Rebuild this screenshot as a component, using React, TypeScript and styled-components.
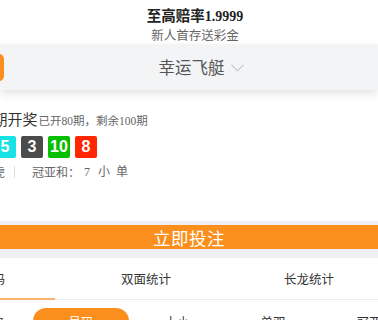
import React from 'react';
import styled, { createGlobalStyle } from 'styled-components';

const COLORS = {
  orange: '#fb8f1d',
  orangeLight: '#f9b36c',
  navBg: '#f3f4f6',
  band: '#efeff4',
  text: '#333333',
  textGray: '#666666',
  line: '#ececec',
};

const BALL_COLORS: Record<number, string> = {
  1: '#e6de00',
  2: '#0092dd',
  3: '#4b4b4b',
  4: '#ff7600',
  5: '#17e2e5',
  6: '#5234ff',
  7: '#bfbfbf',
  8: '#ff2600',
  9: '#780b00',
  10: '#07bf00',
};

const balls = [6, 1, 9, 4, 2, 7, 5, 3, 10, 8];
const dragonTiger = ['龙', '虎', '龙', '龙', '虎'];
const subTabs = ['冷热数', '号码', '大小', '单双', '冠亚'];

const GlobalStyle = createGlobalStyle`
  html, body {
    margin: 0;
    padding: 0;
    background: #fff;
    overflow: hidden;
  }
  body {
    font-family: "Liberation Serif", "Noto Sans CJK SC", serif;
    color: ${COLORS.text};
  }
`;

const ChevronDown = () => (
  <svg width="13" height="8" viewBox="0 0 13 8" fill="none">
    <path d="M0.5 0.8 L6.5 6.8 L12.5 0.8" stroke="#c4c4c4" strokeWidth="1.1" />
  </svg>
);

const App: React.FC = () => (
  <Page>
    <GlobalStyle />
    <Header>
      <Title>
        至高赔率<b>1.9999</b>
      </Title>
      <SubTitle>新人首存送彩金</SubTitle>
    </Header>

    <Nav>
      <BackButton />
      <NavTitle>
        <span>幸运飞艇</span>
        <ChevronDown />
      </NavTitle>
    </Nav>

    <Result>
      <IssueLine>
        第31567期开奖<IssueMeta>已开80期，剩余100期</IssueMeta>
      </IssueLine>
      <Balls>
        {balls.map((n, i) => (
          <Ball key={i} color={BALL_COLORS[n]}>
            {n}
          </Ball>
        ))}
      </Balls>
      <InfoRow>
        <DragonTiger>
          {dragonTiger.map((t, i) => (
            <span key={i}>{t}</span>
          ))}
        </DragonTiger>
        <Divider />
        <SumLabel>冠亚和：</SumLabel>
        <SumValue gap={4}>7</SumValue>
        <SumValue gap={8}>小</SumValue>
        <SumValue gap={6}>单</SumValue>
      </InfoRow>
    </Result>

    <BetBand>
      <BetButton>立即投注</BetButton>
    </BetBand>

    <Tabs>
      <Tab active>号码</Tab>
      <Tab>双面统计</Tab>
      <Tab>长龙统计</Tab>
    </Tabs>

    <SubTabs>
      {subTabs.map(t => (
        <SubTab key={t} active={t === '号码'}>
          {t}
        </SubTab>
      ))}
    </SubTabs>
  </Page>
);

const Page = styled.div`
  width: 378px;
  overflow: hidden;
`;

const Header = styled.div`
  height: 44px;
  padding-left: 12px;
  display: flex;
  flex-direction: column;
  align-items: center;
`;

const Title = styled.div`
  margin-top: 6px;
  font-family: "Noto Sans CJK SC", sans-serif;
  font-size: 14.5px;
  font-weight: 700;
  line-height: 17px;
  color: #222;

  b {
    font-family: "Liberation Serif", serif;
    font-size: 14px;
  }
`;

const SubTitle = styled.div`
  margin-top: 1px;
  font-family: "Noto Sans CJK SC", sans-serif;
  font-size: 12.5px;
  line-height: 17px;
  color: ${COLORS.textGray};
`;

const Nav = styled.div`
  height: 46px;
  display: flex;
  align-items: center;
  background: ${COLORS.navBg};
  box-shadow: 0 4px 9px rgba(0, 0, 0, 0.11);
  position: relative;
`;

const BackButton = styled.div`
  width: 54px;
  height: 27px;
  margin-left: -50px;
  margin-top: 1px;
  border-radius: 5px;
  background: ${COLORS.orange};
`;

const NavTitle = styled.div`
  flex: 1;
  padding-left: 20px;
  display: flex;
  align-items: center;
  justify-content: center;
  gap: 6px;
  font-family: "Noto Sans CJK SC", sans-serif;
  font-size: 16.5px;
  color: #555;

  svg {
    margin-top: 2px;
  }
`;

const Result = styled.div`
  height: 131px;
  padding-top: 20px;
  box-sizing: border-box;
  background: #fff;
`;

const IssueLine = styled.div`
  margin-left: -60px;
  font-size: 15px;
  line-height: 20px;
  white-space: nowrap;
  color: ${COLORS.text};
`;

const IssueMeta = styled.span`
  margin-left: 1px;
  font-size: 11.5px;
  color: ${COLORS.textGray};
`;

const Balls = styled.div`
  display: flex;
  gap: 5px;
  margin-top: 5px;
  margin-left: -168px;
`;

const Ball = styled.div<{ color: string }>`
  flex: none;
  width: 22px;
  height: 22px;
  border-radius: 2px;
  background: ${props => props.color};
  color: #fff;
  font-family: "Liberation Sans", Arial, sans-serif;
  font-weight: 700;
  font-size: 16px;
  display: flex;
  align-items: center;
  justify-content: center;
`;

const InfoRow = styled.div`
  display: flex;
  align-items: center;
  margin-top: 6px;
  margin-left: -87px;
  font-size: 12px;
  line-height: 16px;
  color: ${COLORS.textGray};
  white-space: nowrap;
`;

const DragonTiger = styled.div`
  display: flex;
  gap: 8px;
  font-family: "Noto Sans CJK SC", sans-serif;
`;

const Divider = styled.span`
  width: 1px;
  height: 12px;
  margin: 0 17px 0 9px;
  background: #dcdcdc;
`;

const SumLabel = styled.span`
  font-family: "Noto Sans CJK SC", sans-serif;
`;

const SumValue = styled.span<{ gap: number }>`
  margin-left: ${props => props.gap}px;
`;

const BetBand = styled.div`
  background: ${COLORS.band};
  padding: 4px 0 9px;
`;

const BetButton = styled.div`
  height: 24px;
  display: flex;
  align-items: center;
  justify-content: center;
  background: ${COLORS.orange};
  color: #fff;
  font-family: "Noto Sans CJK SC", sans-serif;
  font-size: 17.5px;
  letter-spacing: 0.5px;
`;

const Tabs = styled.div`
  display: grid;
  grid-template-columns: 125px 182px 144px;
  margin-left: -70px;
  height: 42px;
  border-bottom: 1px solid ${COLORS.line};
  box-sizing: border-box;
  background: #fff;
`;

const Tab = styled.div<{ active?: boolean }>`
  display: flex;
  align-items: center;
  justify-content: center;
  font-family: "Noto Sans CJK SC", sans-serif;
  font-size: 12.5px;
  color: ${COLORS.text};
  border-bottom: 2px solid
    ${props => (props.active ? COLORS.orangeLight : 'transparent')};
  margin-bottom: -1px;
`;

const SubTabs = styled.div`
  display: flex;
  margin-left: -63px;
  padding-top: 8px;
`;

const SubTab = styled.div<{ active?: boolean }>`
  flex: none;
  width: 96px;
  height: 26px;
  border-radius: 13px;
  display: flex;
  align-items: center;
  justify-content: center;
  font-family: "Noto Sans CJK SC", sans-serif;
  font-size: 12.5px;
  color: ${props => (props.active ? '#fff' : COLORS.text)};
  background: ${props => (props.active ? COLORS.orange : 'transparent')};
`;

export default App;
